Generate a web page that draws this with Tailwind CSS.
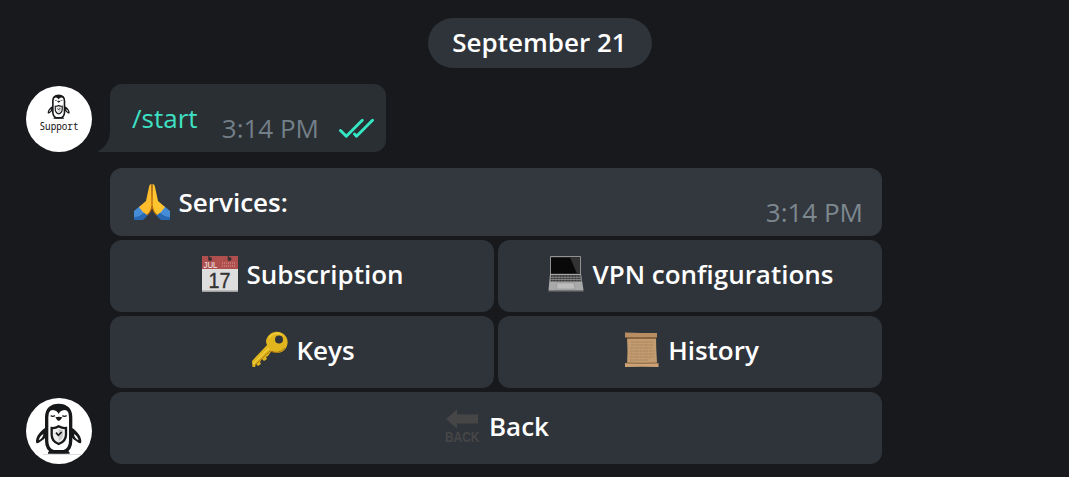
<!DOCTYPE html>
<html lang="en">
<head>
<meta charset="utf-8">
<title>Support chat</title>
<script src="https://cdn.jsdelivr.net/npm/@tailwindcss/browser@4"></script>
</head>
<body class="bg-[#18191d] w-[1069px] h-[477px] overflow-hidden font-['Open_Sans','Noto_Sans',sans-serif] text-[26px] leading-9 text-white">
<svg class="hidden">
  <symbol id="penguin" viewBox="18 18 198 198">
    <path d="M75 108C58 120 47 136 48 150C50 158 58 152 67 145C75 140 80 132 80 126ZM157 108C174 120 185 136 184 150C182 158 174 152 165 145C157 140 152 132 152 126Z" fill="#17181a"/>
    <path d="M70 126C62 131 58 137 56 145C64 141 70 134 70 126ZM162 126C170 131 174 137 176 145C168 141 162 134 162 126Z" fill="#fff"/>
    <path d="M80 76C80 52 95 40 116 40S152 52 152 76V146C152 164 145 174 132 179H100C87 174 80 164 80 146Z" fill="#fff" stroke="#17181a" stroke-width="10"/>
    <path d="M78 78C77 51 94 38 116 38S155 51 154 78C152 63 143 54 133 54C124 55 119 60 116 66C113 60 108 55 99 54C89 54 80 63 78 78Z" fill="#17181a"/>
    <path d="M92 71q6 4 13 0M127 71q6 4 13 0" fill="none" stroke="#17181a" stroke-width="4"/>
    <path d="M106 76Q116 73 127 76Q123 84 116 87Q110 84 106 76Z" fill="#17181a"/>
    <path d="M116 103Q127 109 138 108V128Q138 147 116 156Q95 147 95 128V108Q106 109 116 103Z" fill="#eee" stroke="#17181a" stroke-width="7"/>
    <path d="M116 111Q123 114 129 115V129Q128 141 116 148Z" fill="#c8c8c8"/>
    <path d="M108 122L115 130L125 120" fill="none" stroke="#17181a" stroke-width="5"/>
    <path d="M84 185C83 178 92 173 101 175Q112 176 115 180Q122 175 132 175C141 173 150 178 149 185Z" fill="#17181a"/>
  </symbol>
</svg>
<main class="flex flex-col pt-[18px]">
  <div class="ml-[428px] w-[224px] h-[50px] rounded-full bg-[#2f343b] flex items-center justify-center font-semibold whitespace-nowrap pb-[2px] pr-px">September 21</div>

  <section class="mt-4 ml-[26px] flex items-end h-[68px]">
    <div class="size-[66px] rounded-full bg-white">
      <svg class="size-[66px]" viewBox="18 18 198 198">
        <use href="#penguin" x="67" y="35" width="99" height="96"/>
        <text x="117" y="151" text-anchor="middle" font-family="Noto Sans Mono, DejaVu Sans Mono, monospace" font-size="31" textLength="117" lengthAdjust="spacingAndGlyphs" fill="#111">Support</text>
      </svg>
    </div>
    <svg class="w-[12px] h-[22px] ml-[6px]" viewBox="0 0 12 22"><path d="M12 0V22H1Q-1 21.500 2 20Q12 14 12 0Z" fill="#2a2f33"/></svg>
    <div class="w-[276px] h-[68px] rounded-xl rounded-bl-none bg-[#2a2f33] flex pl-[22px]">
      <span class="pt-[16px] text-[#3ee1c4]">/start</span>
      <span class="ml-auto pt-[26px] text-[#737f88]">3:14 PM</span>
      <svg class="ml-[20px] mr-[12px] mt-[34px] w-[35px] h-[20px]" viewBox="0 0 35 20" fill="none" stroke="#35e6c4" stroke-width="2.900" stroke-linecap="round" stroke-linejoin="round"><path d="M1.500 12.500L7.300 18.200L23.300 2.200M15.500 16.100L17.500 18.200L33.500 2.200"/></svg>
    </div>
  </section>

  <section class="mt-4 ml-[26px] flex items-end gap-[18px]">
    <svg class="size-[66px] rounded-full bg-white"><path d="M17 56.500H55" stroke="#ddd" stroke-width="1"/><use href="#penguin" width="66" height="66"/></svg>
    <div class="w-[772px] flex flex-col gap-1 font-semibold">
      <div class="h-[68px] rounded-xl bg-[#33383f] flex pl-6 pr-[19px]">
        <svg class="mt-[15px] w-9 h-[38px]" viewBox="0 0 36 38">
          <path d="M0 28L6 23L15 30L8 37H0ZM36 28L30 23L21 30L28 37H36Z" fill="#468dd8"/>
          <path d="M0 37H9L15 31L11 29Q6 34 0 34ZM36 37H27L21 31L25 29Q30 34 36 34Z" fill="#2867b2"/>
          <path d="M17.500 1Q15.500 1 15 4L12 18L5 24Q8 29 13 32Q18 28 18 22Z" fill="#ffbd2e"/>
          <path d="M18.500 1Q20.500 1 21 4L24 18L31 24Q28 29 23 32Q18 28 18 22Z" fill="#ffc52f"/>
          <path d="M18 2V23Q17 29 13 32M18 22Q19 29 23 32" fill="none" stroke="#b96a0b" stroke-width="1.200"/>
        </svg>
        <span class="ml-[8.500px] pt-[16px]">Services:</span>
        <span class="ml-auto pt-[26px] font-normal text-[#7d888f]">3:14 PM</span>
      </div>
      <div class="grid grid-cols-2 gap-1">
        <div class="h-[72px] rounded-xl bg-[#2f343b] flex justify-center gap-2 pt-4 pl-px">
          <svg class="w-[37px] h-[38px] -mt-px" viewBox="0 0 37 38">
            <path d="M1 1H37V14H1Z" fill="#b0504e"/><path d="M1 14H37V36.500H1Z" fill="#dedede"/><path d="M1 35H37V36.500H1Z" fill="#bbb"/>
            <circle cx="9" cy="4" r="2" fill="#3b3032"/><circle cx="28.500" cy="4" r="2" fill="#3b3032"/><path d="M9 4Q7 2 8 0M28.500 4Q26.500 2 27.500 0" stroke="#3b3032" stroke-width="1.200" fill="none"/>
            <text x="2.500" y="12.800" font-family="Liberation Sans" font-weight="400" font-size="9" textLength="14" lengthAdjust="spacingAndGlyphs" fill="#eee">JUL</text>
            <path d="M21 8H35M21 11H35" stroke="#c98482" stroke-width="1.500" stroke-dasharray="1 1"/>
            <text x="18.500" y="33" text-anchor="middle" font-family="Liberation Sans" font-weight="400" font-size="22" textLength="22" lengthAdjust="spacingAndGlyphs" fill="#333" stroke="#333" stroke-width=".4">17</text>
          </svg><span>Subscription</span>
        </div>
        <div class="h-[72px] rounded-xl bg-[#2f343b] flex justify-center gap-2 pt-4 pl-px">
          <svg class="w-[37px] h-[38px] -mt-px" viewBox="-1 0 37 38">
            <rect x="2" y="1" width="31" height="19" rx="1" fill="#929292"/><path d="M3 2.200H32V18.800H3Z" fill="#090909"/><path d="M22 2.200H32V18.800H29Z" fill="#333"/>
            <path d="M2 19H33L35.500 35H.5Z" fill="#a9a9a9"/><path d="M3 20H32.500L33.600 26.500H2.500Z" fill="#393939"/><path d="M3 22.300H33M3 24.500H33" stroke="#999" stroke-width=".7"/><path d="M5 20V27M8 20V27M11 20V27M14 20V27M17 20V27M20 20V27M23 20V27M26 20V27M29 20V27M32 20V27" stroke="#999" stroke-width=".5"/><path d="M9 28H26L27 34H8.500Z" fill="#bdbdbd" stroke="#888" stroke-width=".5"/><path d="M.5 35H35.500V36.500H.5Z" fill="#777"/>
          </svg><span class="whitespace-nowrap">VPN configurations</span>
        </div>
        <div class="h-[72px] rounded-xl bg-[#2f343b] flex justify-center gap-2 pt-4 pl-[2px]">
          <svg class="w-[37px] h-[38px] -mt-px" viewBox="0 0 37 38">
            <path fill-rule="evenodd" d="M16 7C19 1 26-.5 31 2C37 5 38 12 35 17C32 22 26 23 21 20L19 22L17 25L15 26L16 28L13 30L11 28L9 31L10 33L7 35L5 33L4 36H1.500L1 30L16 14Q14 10 16 7ZM28 4.500A4 4 0 1 0 28 12.500A4 4 0 1 0 28 4.500Z" fill="#e0b51e"/>
            <path d="M2 33L18 17M18 7C21 2 27 1 31 4" fill="none" stroke="#f0d040" stroke-width="1.200"/><path d="M4 34L19 20Q27 24 34 17" fill="none" stroke="#a77510" stroke-width="1"/>
          </svg><span>Keys</span>
        </div>
        <div class="h-[72px] rounded-xl bg-[#2f343b] flex justify-center gap-2 pt-4 pl-[2px]">
          <svg class="w-[37px] h-[38px] -mt-px" viewBox="-1 0 37 38">
            <path d="M3 5H32Q32 17 33 31L32 35H3Q4 19 3 5Z" fill="#c29b70"/>
            <path d="M1 1.500Q18 2 33 2V6.500Q18 6 1 6.500Z" fill="#b88d62"/><path d="M3 7H32" stroke="#70502f" stroke-width="1.400"/><path d="M1 32Q18 32.500 34.500 32V36Q18 35.500 1 36Z" fill="#cda274"/><path d="M2 32Q18 32.500 34 32" fill="none" stroke="#765536" stroke-width=".8"/>
            <path d="M7 11H29M7 14H29M6 17H29M6 20H30M6 23H30M6 26H30M6 29H25" stroke="#a5825c" stroke-width=".8" stroke-dasharray="3 .7 5 .7"/>
          </svg><span>History</span>
        </div>
      </div>
      <div class="h-[72px] rounded-xl bg-[#2f343b] flex justify-center gap-2 pt-4 pl-px">
        <svg class="w-[37px] h-[38px] -mt-px overflow-visible" viewBox="0 0 37 38"><path d="M2 12L13 2.500V7.500H34V16.500H13V21.500Z" fill="#464646"/><text x="1" y="35" font-family="Liberation Sans" font-size="15.500" font-weight="700" textLength="34.500" lengthAdjust="spacingAndGlyphs" fill="#464646">BACK</text></svg>
        <span>Back</span>
      </div>
    </div>
  </section>
</main>
</body>
</html>
